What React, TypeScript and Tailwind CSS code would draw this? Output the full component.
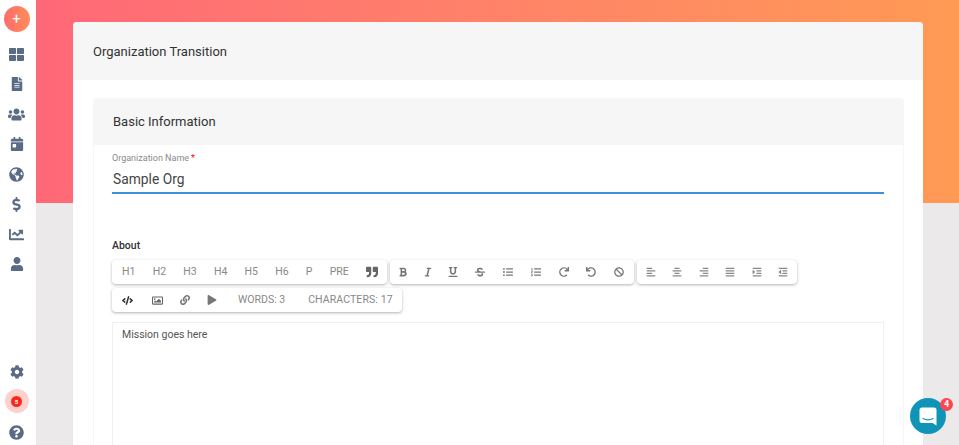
import React from 'react';
import {
  FaThLarge, FaFileAlt, FaUsers, FaCalendarDay, FaGlobeAmericas, FaDollarSign, FaChartLine, FaUser, FaCog, FaQuestionCircle,
  FaQuoteRight, FaBold, FaItalic, FaUnderline, FaStrikethrough, FaListUl, FaListOl, FaRedo, FaUndo, FaBan,
  FaAlignLeft, FaAlignCenter, FaAlignRight, FaAlignJustify, FaIndent, FaOutdent, FaCode, FaRegImage, FaLink, FaPlay,
} from 'react-icons/fa';

const navIcons = [
  { Icon: FaThLarge, size: 15 },
  { Icon: FaFileAlt, size: 14 },
  { Icon: FaUsers, size: 17 },
  { Icon: FaCalendarDay, size: 14 },
  { Icon: FaGlobeAmericas, size: 15 },
  { Icon: FaDollarSign, size: 15 },
  { Icon: FaChartLine, size: 15 },
  { Icon: FaUser, size: 14 },
];

const headings = ['H1', 'H2', 'H3', 'H4', 'H5', 'H6', 'P', 'PRE'];
const formatIcons = [
  { Icon: FaBold, gap: '' },
  { Icon: FaItalic, gap: 'ml-[15px]' },
  { Icon: FaUnderline, gap: 'ml-[15px]' },
  { Icon: FaStrikethrough, gap: 'ml-[17px]' },
  { Icon: FaListUl, gap: 'ml-[18px]' },
  { Icon: FaListOl, gap: 'ml-[18px]' },
  { Icon: FaRedo, gap: 'ml-[18px]' },
  { Icon: FaUndo, gap: 'ml-[17px]' },
  { Icon: FaBan, gap: 'ml-[18px]' },
];
const alignIcons = [FaAlignLeft, FaAlignCenter, FaAlignRight, FaAlignJustify, FaIndent, FaOutdent];

const Group: React.FC<{ className?: string; children: React.ReactNode }> = ({ className, children }) => (
  <div className={`flex h-6 items-center rounded-sm bg-white shadow-[0_1px_3px_rgba(0,0,0,0.3)] ${className ?? ''}`}>
    {children}
  </div>
);

const App: React.FC = () => {
  return (
    <div className="flex h-[445px] w-[959px] overflow-hidden bg-[#ebe9ea] font-['Roboto',sans-serif]">
      <aside className="flex w-9 shrink-0 flex-col items-center bg-white pr-[3px] pt-[6px] text-[#5a6b85]">
        <button className="flex h-[26px] w-[26px] items-center justify-center rounded-full bg-gradient-to-r from-[#ff6b6b] to-[#ff8c5a] text-[15px] leading-none text-white">
          +
        </button>
        <div className="mt-[7px] flex flex-col items-center">
          {navIcons.map(({ Icon, size }, i) => (
            <div key={i} className="flex h-[30px] w-8 items-center justify-center">
              <Icon size={size} />
            </div>
          ))}
        </div>
        <div className="mt-auto flex flex-col items-center">
          <div className="flex h-[30px] items-center justify-center">
            <FaCog size={14} />
          </div>
          <div className="mt-[2px] flex h-6 w-6 items-center justify-center rounded-full bg-[#ffd0cc]">
            <span className="flex h-[11px] w-[11px] items-center justify-center rounded-full bg-[#f8281c] text-[6px] font-bold text-white">5</span>
          </div>
          <div className="mt-[6px] flex h-[26px] items-center justify-center">
            <FaQuestionCircle size={15} />
          </div>
        </div>
      </aside>

      <main className="relative flex-1">
        <div className="absolute inset-x-0 top-0 h-[203px] bg-gradient-to-r from-[#ff6877] to-[#ff9a54]" />
        <section className="relative ml-[37px] mr-9 mt-[22px] h-[423px] rounded-t-[4px] bg-white">
          <header className="flex h-[58px] items-center rounded-t-[4px] bg-[#f6f6f6] px-5 pt-[1px] text-[13px] text-[#333]">
            Organization Transition
          </header>
          <div className="ml-5 mr-[19px] mt-[18px] h-[347px] rounded-t-[4px] border-x border-[#f6f6f6]">
            <div className="-mx-px flex h-[47px] items-center rounded-t-[4px] bg-[#f6f6f6] px-5 text-[13px] text-[#333]">
              Basic Information
            </div>
            <div className="pl-[18px] pr-[19px]">
              <div className="mt-[8px] flex h-[12px] items-center text-[9px] text-[#8a8a8a]">
                Organization Name<span className="ml-[2px] text-[#f00]">*</span>
              </div>
              <div className="mt-[5px] flex h-[24px] items-center border-b-2 border-[#3d8fdc] pb-[4px] pl-px text-[13.8px] text-[#444]">
                Sample Org
              </div>
              <div className="mt-[45px] text-[10.5px] font-medium leading-[14px] text-[#333]">About</div>
              <div className="mt-[7px] flex flex-wrap gap-x-[3px] gap-y-[4px]">
                <Group className="w-[275px] justify-between pl-[10px] pr-[9px] text-[10.5px] text-[#888]">
                  {headings.map((h) => (
                    <span key={h}>{h}</span>
                  ))}
                  <FaQuoteRight size={12} className="text-[#666]" />
                </Group>
                <Group className="w-[244px] pl-[8px] text-[#777]">
                  {formatIcons.map(({ Icon, gap }, i) => (
                    <span key={i} className={`flex w-[10px] justify-center ${gap}`}>
                      <Icon size={10} />
                    </span>
                  ))}
                </Group>
                <Group className="w-[160px] justify-between pl-[9px] pr-[9px] text-[#888]">
                  {alignIcons.map((Icon, i) => (
                    <Icon key={i} size={10} />
                  ))}
                </Group>
                <Group className="w-[290px] pl-[10px] text-[10.5px] text-[#888]">
                  <FaCode size={11} className="text-[#333]" />
                  <FaRegImage size={11} className="ml-[19px] text-[#666]" />
                  <FaLink size={10} className="ml-[17px] text-[#777]" />
                  <FaPlay size={10} className="ml-[17px] text-[#777]" />
                  <span className="ml-[21px]">WORDS: 3</span>
                  <span className="ml-[23px] tracking-[0.1px]">CHARACTERS: 17</span>
                </Group>
              </div>
              <div className="mt-[10px] h-[130px] border border-[#f0f0f0] px-[9px] pt-[5px] text-[10.5px] leading-[14px] text-[#555]">
                Mission goes here
              </div>
            </div>
          </div>
        </section>
        <div className="absolute bottom-[11px] right-[13px] flex h-9 w-9 items-center justify-center rounded-full bg-[#0f94b8]">
          <svg width="18" height="19" viewBox="0 0 18 19" fill="none">
            <path d="M3 0.5h12a2.5 2.5 0 0 1 2.5 2.5v15.5l-4-2.5H3A2.5 2.5 0 0 1 0.5 13.5V3A2.5 2.5 0 0 1 3 0.5z" fill="#fff" />
            <path d="M4 11.5c3 1.6 7 1.6 10 0" stroke="#0f94b8" strokeWidth="1.2" strokeLinecap="round" />
          </svg>
          <span className="absolute -right-[7px] top-0 flex h-[13px] w-[13px] items-center justify-center rounded-full bg-[#f9484f] text-[9px] font-bold text-white">4</span>
        </div>
      </main>
    </div>
  );
};

export default App;
